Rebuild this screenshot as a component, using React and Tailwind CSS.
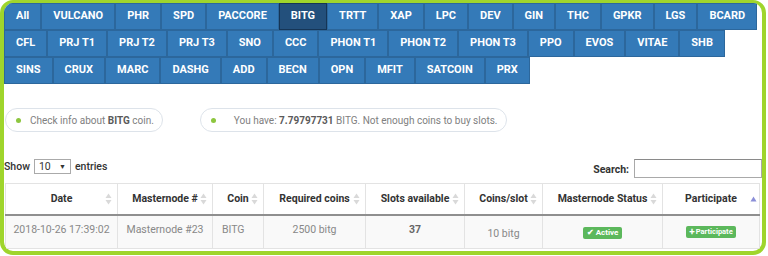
const rows = [
  ['All', 'VULCANO', 'PHR', 'SPD', 'PACCORE', 'BITG', 'TRTT', 'XAP', 'LPC', 'DEV', 'GIN', 'THC', 'GPKR', 'LGS', 'BCARD'],
  ['CFL', 'PRJ T1', 'PRJ T2', 'PRJ T3', 'SNO', 'CCC', 'PHON T1', 'PHON T2', 'PHON T3', 'PPO', 'EVOS', 'VITAE', 'SHB'],
  ['SINS', 'CRUX', 'MARC', 'DASHG', 'ADD', 'BECN', 'OPN', 'MFIT', 'SATCOIN', 'PRX'],
];

const columns = [
  { label: 'Date', w: 'w-[112px]' },
  { label: 'Masternode #', w: 'w-[95px]' },
  { label: 'Coin', w: 'w-[51px]' },
  { label: 'Required coins', w: 'w-[102px]' },
  { label: 'Slots available', w: 'w-[99px]' },
  { label: 'Coins/slot', w: 'w-[78px]' },
  { label: 'Masternode Status', w: 'w-[120px]' },
  { label: 'Participate', w: 'w-[97px]', sorted: true },
];

const SortIcon = () => (
  <svg width="7" height="12" viewBox="0 0 7 12" className="absolute right-[5px] top-1/2 -translate-y-1/2">
    <path d="M3.5 0.5 L6.5 5 L0.5 5 Z" fill="#d9d9d9" />
    <path d="M3.5 11.5 L6.5 7 L0.5 7 Z" fill="#d9d9d9" />
  </svg>
);

const SortedIcon = () => (
  <svg width="7" height="6" viewBox="0 0 7 6" className="absolute right-[2px] top-[12px]">
    <path d="M3.5 0.5 L6.5 5.5 L0.5 5.5 Z" fill="#8b8fd8" />
  </svg>
);

const Pill = ({ children }) => (
  <div className="flex h-[24px] items-center rounded-full border border-[#dde3ea] pl-[10px] pr-[8px] text-[10px] text-[#808080]">
    <span className="mr-[9px] h-[5px] w-[5px] shrink-0 rounded-full bg-[#8dc63f]" />
    {children}
  </div>
);

export default function App() {
  return (
    <div className="h-[256px] w-[768px] overflow-hidden bg-white font-['Roboto',sans-serif]">
      <div className="h-[255px] w-[766px] overflow-hidden rounded-[13px] border-[4px] border-t-[3px] border-[#9fd52c] bg-white">
        <div className="flex flex-col">
          {rows.map((row, i) => (
            <div key={i} className="flex">
              {row.map((coin) => (
                <div
                  key={coin}
                  className={
                    coin === 'BITG'
                      ? 'flex h-[27px] shrink-0 items-center whitespace-nowrap border border-[#153556] bg-[#23507c] px-[11px] text-[11px] font-bold text-white'
                      : 'flex h-[27px] shrink-0 items-center whitespace-nowrap border border-[#2c679c] bg-[#347ab8] px-[11px] text-[11px] font-bold text-white'
                  }
                >
                  {coin}
                </div>
              ))}
            </div>
          ))}
        </div>

        <div className="mt-[24px] ml-px flex gap-[37px]">
          <Pill>
            Check info about&nbsp;<b className="font-bold text-[#5a5a5a]">BITG</b>&nbsp;coin.
          </Pill>
          <Pill>
            <span className="ml-[9px]">You have:&nbsp;</span>
            <b className="font-bold text-[#5a5a5a]">7.79797731</b>&nbsp;BITG. Not enough coins to buy slots.
          </Pill>
        </div>

        <div className="mt-[27px] flex items-start justify-between">
          <div className="flex items-center text-[10.5px] font-medium text-[#333]">
            Show
            <div className="mx-[4px] flex h-[15px] w-[37px] items-center justify-between border border-[#aaa] px-[4px] font-normal">
              <span>10</span>
              <span className="text-[7px]">▼</span>
            </div>
            entries
          </div>
          <div className="flex items-center text-[10.5px] font-bold text-[#333]">
            <span className="mt-[3px]">Search:</span>
            <div className="ml-[5px] h-[19px] w-[128px] border border-[#a9a9a9] border-t-[#8a8a8a]" />
          </div>
        </div>

        <table className="mt-[5px] ml-px w-[754px] table-fixed border-collapse text-[10.5px]">
          <thead>
            <tr className="border-b-[2px] border-[#8f8f8f]">
              {columns.map((c) => (
                <th
                  key={c.label}
                  className={`${c.w} relative h-[31px] border border-b-0 border-[#e3e3e3] text-center font-bold text-[#333]`}
                >
                  {c.label}
                  {c.sorted ? <SortedIcon /> : <SortIcon />}
                </th>
              ))}
            </tr>
          </thead>
          <tbody>
            <tr className="h-[34px] bg-[#f9f9f9] align-top text-[#888]">
              <td className="border border-[#e3e3e3] pt-[6px] text-center">2018-10-26 17:39:02</td>
              <td className="border border-[#e3e3e3] pt-[6px] text-center">Masternode #23</td>
              <td className="border border-[#e3e3e3] pt-[6px] pl-[9px]">BITG</td>
              <td className="border border-[#e3e3e3] pt-[6px] text-center">2500 bitg</td>
              <td className="border border-[#e3e3e3] pt-[6px] text-center font-bold text-[#666]">37</td>
              <td className="border border-[#e3e3e3] pt-[10px] text-center">10 bitg</td>
              <td className="border border-[#e3e3e3] pt-[8px] text-center">
                <span className="inline-flex h-[12px] items-center gap-[2px] rounded-[2px] bg-[#5cb85c] px-[4px] text-[8px] font-bold text-white">
                  <span className="text-[8px]">✔</span>Active
                </span>
              </td>
              <td className="border border-[#e3e3e3] pt-[8px] text-center">
                <span className="inline-flex h-[12px] items-center gap-[1px] rounded-[2px] bg-[#5cb85c] px-[3px] text-[7.5px] font-bold text-white">
                  <span className="text-[10px] leading-none">+</span>Participate
                </span>
              </td>
            </tr>
          </tbody>
        </table>
      </div>
    </div>
  );
}
